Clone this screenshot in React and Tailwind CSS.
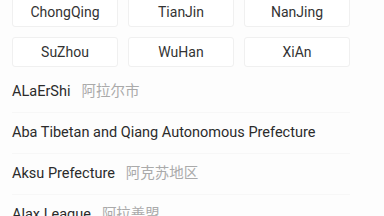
export default function App() {
  const cities = ["ChongQing", "TianJin", "NanJing", "SuZhou", "WuHan", "XiAn"];
  const items = [
    ["ALaErShi", "阿拉尔市"],
    ["Aba Tibetan and Qiang Autonomous Prefecture", ""],
    ["Aksu Prefecture", "阿克苏地区"],
    ["Alax League", "阿拉善盟"],
  ];
  return (
    <div
      className="w-[384px] h-[216px] overflow-hidden bg-[#fdfdfd]"
      style={{ fontFamily: 'Roboto, "Noto Sans CJK SC", sans-serif' }}
    >
      <div className="mt-[-3px] pl-[12px] w-[350px]">
        <div className="grid grid-cols-3 gap-x-[10px] gap-y-[10px]">
          {cities.map((c) => (
            <div
              key={c}
              className="h-[30px] flex items-center justify-center bg-white border border-[#f0f0f0] rounded-[3px] text-[14px] text-[#333]"
            >
              {c}
            </div>
          ))}
        </div>
        <div className="mt-[5px]">
          {items.map(([en, zh]) => (
            <div
              key={en}
              className="h-[41px] flex items-center text-[14.5px] border-b border-[#f7f7f7]"
            >
              <span className="text-[#2b2b2b]">{en}</span>
              {zh && <span className="ml-[11px] text-[#aaa]">{zh}</span>}
            </div>
          ))}
        </div>
      </div>
    </div>
  );
}
